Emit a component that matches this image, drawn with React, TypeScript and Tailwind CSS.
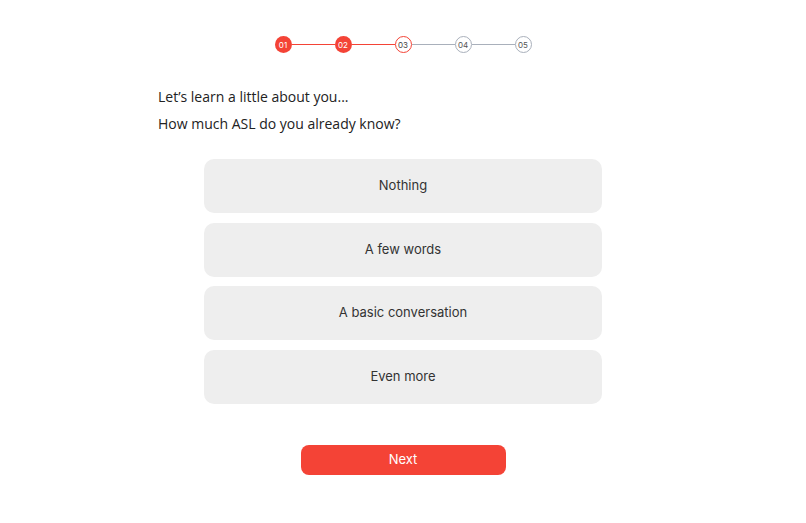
const steps = ['01', '02', '03', '04', '05'];
const current = 3;

const options = ['Nothing', 'A few words', 'A basic conversation', 'Even more'];

function Stepper() {
  return (
    <div className="flex items-center justify-center pt-[36px]">
      {steps.map((s, i) => {
        const n = i + 1;
        const done = n < current;
        const active = n === current;
        return (
          <div key={s} className="flex items-center">
            {i > 0 && (
              <div
                className={
                  n <= current ? 'h-px w-[43px] bg-[#f44336]' : 'h-px w-[43px] bg-[#a9b0bb]'
                }
              />
            )}
            <div
              className={
                done
                  ? 'flex h-[17px] w-[17px] items-center justify-center rounded-full bg-[#f44336] text-[8px] text-white'
                  : active
                  ? 'flex h-[17px] w-[17px] items-center justify-center rounded-full border border-[#f44336] bg-white text-[8px] text-[#444]'
                  : 'flex h-[17px] w-[17px] items-center justify-center rounded-full border border-[#a9b0bb] bg-white text-[8px] text-[#555]'
              }
            >
              {s}
            </div>
          </div>
        );
      })}
    </div>
  );
}

export default function App() {
  return (
    <main className="min-h-screen w-full bg-white font-['Inter',sans-serif]">
      <Stepper />

      <section className="mt-[35px] pl-[158px] font-['Open_Sans',sans-serif] text-[14px] text-[#222]">
        <p className="leading-[18px]">Let’s learn a little about you...</p>
        <p className="mt-[9px] leading-[18px]">How much ASL do you already know?</p>
      </section>

      <div className="mx-auto mt-[26px] flex w-[398px] flex-col gap-[9.5px]">
        {options.map((o) => (
          <button
            key={o}
            className="flex h-[54px] w-full items-center justify-center rounded-[10px] bg-[#eeeeee] text-[13px] text-[#333]"
          >
            {o}
          </button>
        ))}
      </div>

      <div className="mt-[41.5px] flex justify-center">
        <button className="h-[30px] w-[205px] rounded-[8px] bg-[#f44336] text-[13px] text-white">
          Next
        </button>
      </div>
    </main>
  );
}
